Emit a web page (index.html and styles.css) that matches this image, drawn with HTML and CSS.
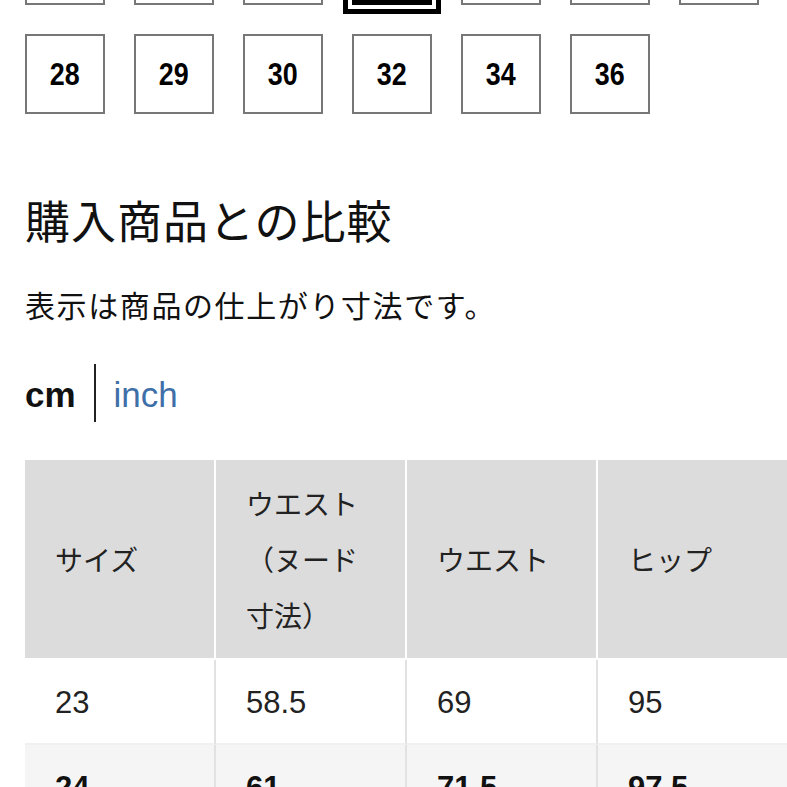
FILE: index.html
```html
<!DOCTYPE html>
<html lang="ja">
<head>
<meta charset="utf-8">
<link rel="stylesheet" href="styles.css">
</head>
<body>
<div class="page">
  <div class="sizes">
    <div class="size"></div>
    <div class="size"></div>
    <div class="size"></div>
    <div class="size selected"></div>
    <div class="size"></div>
    <div class="size"></div>
    <div class="size"></div>
    <div class="size"><span class="num">28</span></div>
    <div class="size"><span class="num">29</span></div>
    <div class="size"><span class="num">30</span></div>
    <div class="size"><span class="num">32</span></div>
    <div class="size"><span class="num">34</span></div>
    <div class="size"><span class="num">36</span></div>
  </div>

  <h2 class="title">購入商品との比較</h2>
  <p class="note">表示は商品の仕上がり寸法です。</p>

  <div class="units">
    <span class="unit active">cm</span>
    <span class="divider"></span>
    <span class="unit link">inch</span>
  </div>

  <div class="table-wrap">
    <table class="chart">
      <colgroup>
        <col class="col"><col class="col"><col class="col"><col class="col"><col class="col">
      </colgroup>
      <thead>
        <tr>
          <th>サイズ</th>
          <th>ウエスト（ヌード寸法）</th>
          <th>ウエスト</th>
          <th>ヒップ</th>
          <th></th>
        </tr>
      </thead>
      <tbody>
        <tr>
          <td>23</td>
          <td>58.5</td>
          <td>69</td>
          <td>95</td>
          <td></td>
        </tr>
        <tr class="current">
          <td>24</td>
          <td>61</td>
          <td>71.5</td>
          <td>97.5</td>
          <td></td>
        </tr>
      </tbody>
    </table>
  </div>
</div>
</body>
</html>
```
FILE: styles.css
```css
html, body {
  margin: 0;
  padding: 0;
  background: #fff;
  overflow: hidden;
}

.page {
  padding-left: 25px;
  color: #111;
  font-family: "Liberation Sans", "Noto Sans CJK JP", sans-serif;
}

.sizes {
  display: grid;
  grid-template-columns: repeat(7, 80px);
  grid-auto-rows: 80px;
  gap: 29px;
  margin-top: -75px;
}

.size {
  box-sizing: border-box;
  border: 2px solid #777;
  display: flex;
  align-items: center;
  justify-content: center;
}

.num {
  display: inline-block;
  font-family: "Liberation Sans", sans-serif;
  font-weight: 700;
  font-size: 32px;
  line-height: 1;
  color: #000;
  transform: scaleX(0.84);
}

.size.selected {
  background: #000;
  border-color: #000;
  outline: 5px solid #000;
  outline-offset: 4px;
}

.title {
  margin: 79px 0 0;
  font-family: "Noto Sans CJK JP", sans-serif;
  font-weight: 400;
  font-size: 45px;
  letter-spacing: 1px;
  line-height: 54px;
  color: #111;
}

.note {
  margin: 37px 0 0;
  font-family: "Noto Sans CJK JP", sans-serif;
  font-weight: 400;
  font-size: 30px;
  letter-spacing: 1.6px;
  line-height: 40px;
  color: #111;
}

.units {
  display: flex;
  align-items: center;
  height: 58px;
  margin-top: 40px;
  gap: 18px;
}

.unit {
  font-size: 35px;
  line-height: 40px;
  padding-top: 4px;
}

.unit.active {
  font-weight: 700;
  color: #111;
}

.unit.link {
  color: #3f6fa8;
}

.divider {
  width: 2px;
  height: 58px;
  background: #222;
}

.table-wrap {
  margin-top: 38px;
  overflow: hidden;
}

.chart {
  border-collapse: separate;
  border-spacing: 0;
  table-layout: fixed;
  width: 955px;
}

.chart .col {
  width: 191px;
}

.chart th,
.chart td {
  box-sizing: border-box;
  padding: 0 30px;
  text-align: left;
  vertical-align: middle;
}

.chart th {
  background: #dcdcdc;
  height: 200px;
  border-right: 2px solid #fff;
  border-bottom: 2px solid #fff;
  font-family: "Noto Sans CJK JP", sans-serif;
  font-weight: 400;
  font-size: 28px;
  line-height: 56px;
  color: #222;
}

.chart td {
  height: 85px;
  border-right: 2px solid #e2e2e2;
  border-bottom: 2px solid #f0f0f0;
  font-size: 31px;
  color: #222;
  padding-top: 2px;
}

.chart tr.current td {
  background: #f5f5f5;
  font-weight: 700;
  color: #111;
}
```
